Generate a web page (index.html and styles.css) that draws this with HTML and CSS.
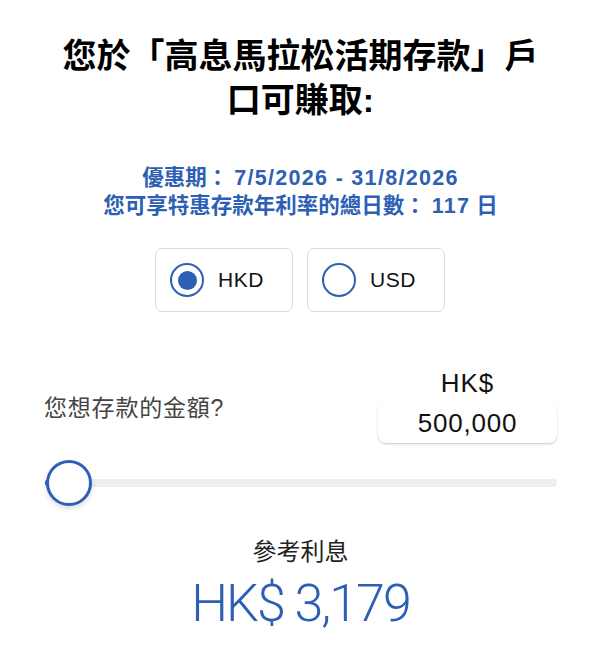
FILE: index.html
```html
<!DOCTYPE html>
<html lang="zh-Hant">
<head>
<meta charset="utf-8">
<title>高息馬拉松活期存款</title>
<link rel="stylesheet" href="styles.css">
</head>
<body>
<main class="page">
  <h1 class="title">您於「高息馬拉松活期存款」戶口可賺取:</h1>

  <div class="promo">
    <div class="promo-line">優惠期： <span class="latin">7/5/2026 - 31/8/2026</span></div>
    <div class="promo-line">您可享特惠存款年利率的總日數： <span class="latin">117</span> 日</div>
  </div>

  <div class="currency">
    <label class="opt">
      <span class="radio radio-on"><span class="dot"></span></span>
      <span class="opt-text">HKD</span>
    </label>
    <label class="opt">
      <span class="radio"></span>
      <span class="opt-text">USD</span>
    </label>
  </div>

  <div class="amount-row">
    <div class="amount-label">您想存款的金額?</div>
    <div class="amount-field">
      <div class="amount-cur">HK$</div>
      <div class="amount-box">500,000</div>
    </div>
  </div>

  <div class="slider">
    <div class="track"><div class="fill"></div></div>
    <div class="thumb"></div>
  </div>

  <div class="result">
    <div class="result-label">參考利息</div>
    <div class="result-value">HK$ 3,179</div>
  </div>
</main>
</body>
</html>
```

FILE: styles.css
```css
html, body {
  margin: 0;
  padding: 0;
  background: #ffffff;
}

body {
  font-family: "Liberation Sans", "Noto Sans CJK TC", sans-serif;
  color: #111111;
}

.page {
  padding: 34px 43px 0 44px;
}

.title {
  margin: 0;
  padding: 0 15px;
  font-size: 34px;
  line-height: 44px;
  font-weight: 700;
  text-align: center;
  color: #000000;
}

.promo {
  margin-top: 42px;
  text-align: center;
  color: #2d5fb5;
  font-size: 21.5px;
  line-height: 28px;
  font-weight: 700;
}

.promo .latin {
  letter-spacing: 1.3px;
}

.currency {
  margin-top: 28px;
  display: flex;
  justify-content: center;
  gap: 14px;
  margin-left: -1px;
}

.opt {
  box-sizing: border-box;
  width: 138px;
  height: 64px;
  border: 1.5px solid #dcdcdc;
  border-radius: 7px;
  display: flex;
  align-items: center;
  gap: 14px;
  padding-left: 14px;
}

.radio {
  box-sizing: border-box;
  width: 34px;
  height: 34px;
  border: 2px solid #2d5fb5;
  border-radius: 50%;
  display: flex;
  align-items: center;
  justify-content: center;
}

.dot {
  width: 19px;
  height: 19px;
  border-radius: 50%;
  background: #2d5fb5;
}

.opt-text {
  font-size: 21px;
  letter-spacing: 0.5px;
  color: #111111;
}

.amount-row {
  margin-top: 56px;
  display: flex;
  justify-content: space-between;
  align-items: center;
}

.amount-label {
  font-size: 23px;
  color: #444444;
  letter-spacing: 0.8px;
}

.amount-field {
  width: 179px;
  display: flex;
  flex-direction: column;
  align-items: center;
  gap: 5px;
}

.amount-cur {
  font-size: 26px;
  line-height: 30px;
  letter-spacing: 1px;
  color: #111111;
}

.amount-box {
  box-sizing: border-box;
  width: 100%;
  height: 40px;
  border-radius: 8px;
  background: #ffffff;
  box-shadow: 0 1px 2px rgba(0, 0, 0, 0.22);
  font-size: 26px;
  line-height: 40px;
  letter-spacing: 0.8px;
  text-align: center;
  color: #111111;
}

.slider {
  position: relative;
  margin-top: 17px;
  height: 46px;
  display: flex;
  align-items: center;
}

.track {
  width: 100%;
  height: 8px;
  margin-left: 1px;
  border-radius: 4px;
  background: #eeeeee;
  overflow: hidden;
}

.fill {
  width: 8px;
  height: 100%;
  background: #2d5fb5;
}

.thumb {
  position: absolute;
  left: 2px;
  top: 0;
  box-sizing: border-box;
  width: 46px;
  height: 46px;
  border: 3px solid #2d5fb5;
  border-radius: 50%;
  background: #ffffff;
  box-shadow: 0 3px 5px rgba(0, 0, 0, 0.12);
}

.result {
  margin-top: 31px;
  text-align: center;
}

.result-label {
  font-size: 24px;
  line-height: 30px;
  color: #222222;
}

.result-value {
  margin-top: 7px;
  font-family: Roboto, "Liberation Sans", sans-serif;
  font-weight: 300;
  font-size: 52px;
  line-height: 60px;
  letter-spacing: -2px;
  color: #2d5fb5;
}
```
